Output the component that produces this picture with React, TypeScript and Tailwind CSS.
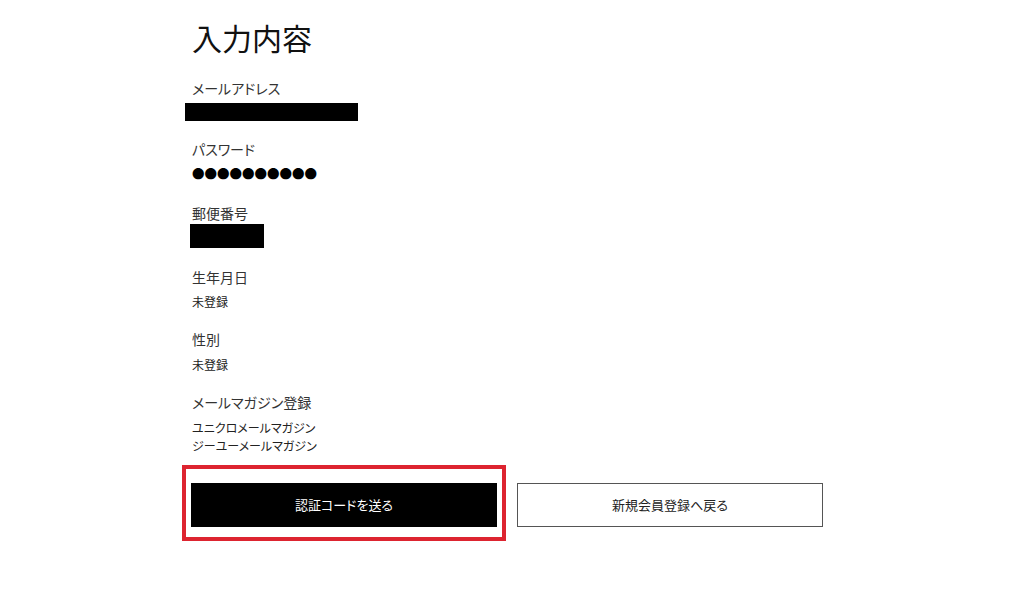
const font = { fontFamily: '"Noto Sans CJK JP", "Noto Sans", sans-serif' };

function Label({ children, className = "" }: { children: React.ReactNode; className?: string }) {
  return (
    <p className={`text-[14px] leading-[20px] text-[#333333] [font-feature-settings:'palt'] ${className}`}>
      {children}
    </p>
  );
}

function Value({ children, className = "" }: { children: React.ReactNode; className?: string }) {
  return (
    <p className={`text-[12px] leading-[20px] text-[#222222] [font-feature-settings:'palt'] ${className}`}>
      {children}
    </p>
  );
}

export default function App() {
  return (
    <div className="min-h-[600px] w-[1024px] bg-white" style={font}>
      <div className="mx-auto w-[640px] pt-[17px]">
        <h1 className="text-[30px] leading-[40px] font-normal text-[#111111]">入力内容</h1>

        <Label className="mt-[21px]">メールアドレス</Label>
        <div className="mt-[5px] -ml-[7px] h-[18px] w-[173px] bg-black" />

        <Label className="mt-[18px]">パスワード</Label>
        <p className="mt-[5px] text-[12.5px] leading-[20px] text-black">●●●●●●●●●●</p>

        <Label className="mt-[19px]">郵便番号</Label>
        <div className="mt-[1px] -ml-[2px] h-[24px] w-[74px] bg-black" />

        <Label className="mt-[19px]">生年月日</Label>
        <Value className="mt-[5px]">未登録</Value>

        <Label className="mt-[17px]">性別</Label>
        <Value className="mt-[6px]">未登録</Value>

        <Label className="mt-[17px]">メールマガジン登録</Label>
        <div className="mt-[7px] text-[12px] leading-[18px] text-[#222222] [font-feature-settings:'palt']">
          <p>ユニクロメールマガジン</p>
          <p>ジーユーメールマガジン</p>
        </div>

        <div className="mt-[28px] -ml-[1px] grid grid-cols-[306px_306px] gap-[20px]">
          <div className="relative">
            <button className="flex h-[44px] w-full items-center justify-center bg-black text-[13px] text-white [font-feature-settings:'palt']">
              認証コードを送る
            </button>
            <div className="pointer-events-none absolute -left-[9px] -right-[9px] -top-[18px] -bottom-[14px] border-4 border-[#dd2430]" />
          </div>
          <button className="flex h-[44px] w-full items-center justify-center border border-[#555555] bg-white text-[13px] text-[#222222] [font-feature-settings:'palt']">
            新規会員登録へ戻る
          </button>
        </div>
      </div>
    </div>
  );
}
